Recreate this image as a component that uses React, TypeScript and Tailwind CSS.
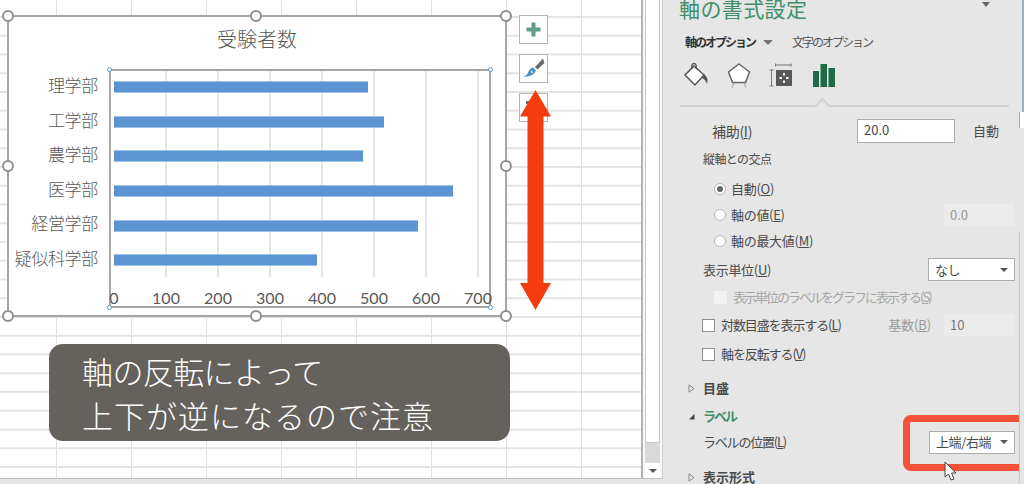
const jp = "font-['Noto_Sans_CJK_JP','Noto_Sans',sans-serif]";

const departments = [
  { name: "理学部", value: 488 },
  { name: "工学部", value: 520 },
  { name: "農学部", value: 479 },
  { name: "医学部", value: 651 },
  { name: "経営学部", value: 585 },
  { name: "疑似科学部", value: 390 },
];

const ticks = [0, 100, 200, 300, 400, 500, 600, 700];

function Handle({ className }: { className: string }) {
  return (
    <div
      className={`absolute w-[12px] h-[12px] rounded-full bg-white border-2 border-[#8f8f8f] ${className}`}
    />
  );
}

function Dot({ className }: { className: string }) {
  return (
    <div
      className={`absolute w-[5px] h-[5px] rounded-full bg-white border border-[#5b9bd5] ${className}`}
    />
  );
}

function Chart() {
  return (
    <div className="absolute left-[7px] top-[15px] w-[500px] h-[302px] bg-white border-2 border-[#a6a6a6] font-light">
      <div className="h-[52px] pt-[8px] text-center text-[20px] leading-[28px] text-[#595959]">
        受験者数
      </div>
      <div className="flex">
        <div className="w-[89px] mr-[1px] text-right text-[17px] text-[#595959]">
          {departments.map((d) => (
            <div key={d.name} className="h-[34.6px] leading-[32px] tracking-[-0.3px] whitespace-nowrap">
              {d.name}
            </div>
          ))}
        </div>
        <div className="relative ml-[10px] w-[382px] h-[239px] border-2 border-[#a6a6a6]">
          {ticks.slice(1).map((t, i) => (
            <div
              key={t}
              className="absolute top-0 h-[206px] w-[2px] bg-[#e6e6e6]"
              style={{ left: 54 + i * 52 }}
            />
          ))}
          <div className="relative pl-[3px] -mt-[1px]">
            {departments.map((d) => (
              <div key={d.name} className="h-[34.6px] flex items-center">
                <div
                  className="h-[12px] bg-[#5b93d3] border-y border-[#9cc4ea]"
                  style={{ width: d.value * 0.52 }}
                />
              </div>
            ))}
          </div>
          <div className="flex -ml-[23px] mt-[10px] font-['Lato',sans-serif] font-normal text-[16px] leading-[20px] text-[#595959]">
            {ticks.map((t) => (
              <div key={t} className="w-[52px] shrink-0 text-center">
                {t}
              </div>
            ))}
          </div>
        </div>
      </div>
    </div>
  );
}

function Arrow() {
  return (
    <svg className="absolute left-[519px] top-[89px]" width="33" height="222" viewBox="0 0 33 222">
      <path d="M16.5 1 L32 27.5 L24.5 27.5 L24.5 194 L32 194 L16.5 221 L1 194 L8.5 194 L8.5 27.5 L1 27.5 Z" fill="#f53c0c" />
    </svg>
  );
}

function ChartButtons() {
  return (
    <div className="absolute left-[519px] top-[15px] flex flex-col gap-[10px]">
      <div className="w-[29px] h-[29px] bg-white border border-[#b5b5b5] flex items-center justify-center">
        <svg width="15" height="15" viewBox="0 0 15 15">
          <path d="M5.5 0.5h4v5h5v4h-5v5h-4v-5h-5v-4h5z" fill="#5f9d8a" />
        </svg>
      </div>
      <div className="w-[29px] h-[29px] bg-white border border-[#b5b5b5] flex items-center justify-center">
        <svg width="23" height="23" viewBox="0 0 23 23">
          <path d="M13 10 L21 1.5 L22.5 6 L15.5 12.5 Z" fill="#6b6b6b" />
          <path d="M11 10.5 L14 13.5 Q12 20 1 20 Q5.5 18 6.5 14.5 Q8 11 11 10.5Z" fill="#4f8fc7" />
          <path d="M9 14 L11 16" stroke="#cfe2f3" strokeWidth="1.5" />
        </svg>
      </div>
      <div className="w-[29px] h-[29px] bg-white border border-[#b5b5b5] flex items-center justify-center">
        <svg width="17" height="17" viewBox="0 0 17 17">
          <path d="M1 2h5l2 3H1z" fill="#6b6b6b" />
        </svg>
      </div>
    </div>
  );
}

function Sheet() {
  return (
    <div className="relative w-[643px] h-[478px] shrink-0 overflow-hidden border-r-2 border-[#b4b4b4] bg-white bg-[linear-gradient(to_bottom,#e3e3e3_1.5px,transparent_1.5px),linear-gradient(to_right,#e0e0e0_1.5px,transparent_1.5px)] bg-[size:100%_18.75px,75px_100%] bg-[position:0_16px,56px_0]">
      <Chart />
      <Handle className="left-[2px] top-[10px]" />
      <Handle className="left-[250px] top-[10px]" />
      <Handle className="left-[500px] top-[10px]" />
      <Handle className="left-[2px] top-[160px]" />
      <Handle className="left-[500px] top-[160px]" />
      <Handle className="left-[2px] top-[310px]" />
      <Handle className="left-[250px] top-[310px]" />
      <Handle className="left-[500px] top-[310px]" />
      <Dot className="left-[107px] top-[67px]" />
      <Dot className="left-[488px] top-[67px]" />
      <Dot className="left-[107px] top-[305px]" />
      <Dot className="left-[488px] top-[305px]" />
      <ChartButtons />
      <Arrow />
      <div className="absolute left-[49px] top-[344px] w-[461px] h-[97px] rounded-[14px] bg-[#625e5a]/98 pl-[33px] pt-[5px] text-[31px] leading-[44px] text-white font-light">
        <div className="tracking-[-0.6px]">軸の反転によって</div>
        <div className="tracking-[1px]">上下が逆になるので注意</div>
      </div>
    </div>
  );
}

function Scrollbar() {
  return (
    <div className="w-[20px] h-[478px] shrink-0 bg-[#f7f7f7] pl-[2px] pr-[2px] flex flex-col border-r border-[#cfcfcf]">
      <div className="h-[443px] bg-white border border-[#c9c9c9] border-t-0" />
      <div className="h-[20px] bg-[#d9d9d9]" />
      <div className="h-[15px] bg-white flex items-center justify-center">
        <div className="w-0 h-0 border-x-[4px] border-x-transparent border-t-[4px] border-t-[#555]" />
      </div>
    </div>
  );
}

function Radio({ checked, label, u }: { checked?: boolean; label: string; u: string }) {
  return (
    <div className="h-[26px] flex items-center pl-[49px] text-[13px] text-[#4a4a4a]">
      <div className="w-[12px] h-[12px] rounded-full bg-white border border-[#b5b5b5] flex items-center justify-center">
        {checked && <div className="w-[6px] h-[6px] rounded-full bg-[#666]" />}
      </div>
      <span className="ml-[5px] tracking-[-0.3px]">
        {label}(<span className="underline">{u}</span>)
      </span>
    </div>
  );
}

function Check({
  label,
  u,
  disabled,
  inset,
  tracking,
}: {
  label: string;
  u: string;
  disabled?: boolean;
  inset?: boolean;
  tracking: string;
}) {
  return (
    <div className={`flex items-center text-[13px] ${tracking} ${inset ? "pl-[49px]" : "pl-[37px]"}`}>
      <div
        className={`w-[13px] h-[13px] ${disabled ? "bg-[#f2f2f2]" : "bg-white border border-[#8f8f8f]"}`}
      />
      <span className={`ml-[6px] ${disabled ? "text-[#a6a6a6]" : "text-[#4a4a4a]"}`}>
        {label}(<span className="underline">{u}</span>)
      </span>
    </div>
  );
}

function Caret({ open }: { open?: boolean }) {
  return open ? (
    <svg width="7" height="7" viewBox="0 0 7 7" className="ml-[23px]">
      <path d="M6.5 1v5.5H1z" fill="#404040" />
    </svg>
  ) : (
    <svg width="7" height="9" viewBox="0 0 7 9" className="ml-[23px]">
      <path d="M1 .8L6 4.5L1 8.2Z" fill="none" stroke="#8a8a8a" />
    </svg>
  );
}

function Select({ text, w }: { text: string; w: string }) {
  return (
    <div className={`h-[23px] bg-white border border-[#ababab] flex items-center justify-between pl-[6px] pr-[6px] text-[13px] text-[#4a4a4a] ${w}`}>
      <span className="tracking-[-0.4px]">{text}</span>
      <div className="w-0 h-0 border-x-[4px] border-x-transparent border-t-[4px] border-t-[#555]" />
    </div>
  );
}

function FormatIcons() {
  return (
    <div className="flex items-center h-[28px] pl-[18px] mt-[9px]">
      <svg width="26" height="26" viewBox="0 0 26 26" className="shrink-0">
        <path d="M2 13 L11 4 L21 13 L12 23 Z" fill="#fff" stroke="#555" strokeWidth="1.5" />
        <path d="M9 7 Q8 1.5 11 1.5 Q14 1.5 13 7" fill="none" stroke="#555" strokeWidth="1.4" />
        <path d="M21 12 Q26 16 24 22 Q22 17 19 16Z" fill="#555" />
      </svg>
      <svg width="24" height="26" viewBox="0 0 24 26" className="ml-[18px] shrink-0">
        <path d="M12 2 L22.5 10 L18.5 20.5 L5.5 20.5 L1.5 10 Z" fill="#fff" stroke="#666" strokeWidth="1.5" />
        <path d="M5 25.5 L7 21 M19 25.5 L17 21" fill="none" stroke="#aaa" strokeWidth="1.2" />
      </svg>
      <svg width="24" height="24" viewBox="0 0 24 24" className="ml-[18px] shrink-0">
        <path d="M6.5 2 H22 M6.5 .5 V3.5 M22 .5 V3.5 M.5 7 H4.5 M.5 23 H4.5 M2.5 7 V23" fill="none" stroke="#777" />
        <rect x="7" y="7" width="16" height="16" fill="#595959" />
        <path d="M15 10 V12.5 M15 17.5 V20 M10.5 15 H13 M17 15 H19.5" stroke="#fff" strokeWidth="1.8" />
      </svg>
      <svg width="22" height="23" viewBox="0 0 22 23" className="ml-[20px] shrink-0">
        <rect x="0" y="7" width="6" height="16" fill="#1f6b47" />
        <rect x="7.5" y="0" width="6.5" height="23" fill="#1f6b47" />
        <rect x="15.5" y="4" width="6.5" height="19" fill="#1f6b47" />
      </svg>
    </div>
  );
}

function Panel() {
  return (
    <div className="relative flex-1 h-[484px] bg-[#e6e6e6] overflow-hidden text-[#4a4a4a]">
      <div className="h-[20px] pl-[14px] -mt-[6px] text-[21px] leading-[28px] text-[#3f8f6b] tracking-[0.4px]">
        軸の書式設定
      </div>
      <div className="flex items-center mt-[18px] h-[20px] pl-[20px] text-[12px]">
        <span className="font-bold tracking-[-2px] text-[#333]">軸のオプション</span>
        <div className="ml-[8px] w-0 h-0 border-x-[5px] border-x-transparent border-t-[5px] border-t-[#777]" />
        <span className="ml-[19px] tracking-[-2px] text-[#555]">文字のオプション</span>
      </div>
      <FormatIcons />
      <div className="relative mt-[16px] mx-[15px] h-[2px] bg-[#d2d2d2]">
        <div className="absolute left-[137px] -top-[5px] w-[11px] h-[11px] rotate-45 bg-[#e6e6e6] border-l-2 border-t-2 border-[#d2d2d2]" />
      </div>

      <div className="mt-[12px] h-[24px] flex items-center pl-[47px] text-[14px]">
        <span className="w-[145px] tracking-[-0.3px]">補助(<span className="underline">I</span>)</span>
        <div className="w-[98px] h-[24px] bg-white border border-[#ababab] pl-[6px] leading-[20px] text-[13px]">20.0</div>
        <span className="ml-[18px] text-[13px]">自動</span>
      </div>
      <div className="mt-[6px] h-[20px] flex items-center pl-[38px] text-[12px] tracking-[-0.6px]">縦軸との交点</div>
      <div className="mt-[7px] relative">
        <Radio checked label="自動" u="O" />
        <Radio label="軸の値" u="E" />
        <Radio label="軸の最大値" u="M" />
        <div className="absolute left-[279px] top-[28px] w-[70px] h-[22px] bg-[#ebebeb] pl-[6px] leading-[22px] text-[13px] text-[#9a9a9a]">0.0</div>
      </div>
      <div className="mt-[4px] h-[23px] flex items-center justify-between pl-[38px] pr-[9px] text-[13px]">
        <span className="tracking-[-0.3px]">表示単位(<span className="underline">U</span>)</span>
        <Select text="なし" w="w-[87px]" />
      </div>
      <div className="mt-[5px] h-[22px] flex items-center">
        <Check disabled inset tracking="tracking-[-2px]" label="表示単位のラベルをグラフに表示する" u="S" />
      </div>
      <div className="mt-[6px] h-[22px] flex items-center justify-between pr-[10px]">
        <Check tracking="tracking-[-1.1px]" label="対数目盛を表示する" u="L" />
        <div className="flex items-center">
          <span className="text-[13px] text-[#9a9a9a] tracking-[-0.1px]">基数(<span className="underline">B</span>)</span>
          <div className="ml-[13px] w-[70px] h-[22px] bg-[#ebebeb] pl-[6px] leading-[22px] text-[13px] text-[#777]">10</div>
        </div>
      </div>
      <div className="mt-[7px] h-[22px] flex items-center">
        <Check tracking="tracking-[-1.1px]" label="軸を反転する" u="V" />
      </div>
      <div className="mt-[13px] h-[20px] flex items-center text-[13px] font-bold text-[#4a4a4a]">
        <Caret />
        <span className="ml-[8px]">目盛</span>
      </div>
      <div className="mt-[8px] h-[20px] flex items-center text-[13px] font-bold text-[#3f8f6b]">
        <Caret open />
        <span className="ml-[8px] tracking-[-2px]">ラベル</span>
      </div>
      <div className="mt-[4px] h-[24px] flex items-center justify-between pl-[38px] pr-[9px] text-[13px]">
        <span className="tracking-[-1.2px]">ラベルの位置(<span className="underline">L</span>)</span>
        <Select text="上端/右端" w="w-[86px]" />
      </div>
      <div className="mt-[13px] h-[20px] flex items-center text-[13px] font-bold">
        <Caret />
        <span className="ml-[8px]">表示形式</span>
      </div>

      <div className="absolute left-[317px] top-[2px] w-0 h-0 border-x-[4px] border-x-transparent border-t-[5px] border-t-[#666]" />
      <div className="absolute right-[-8px] top-[415px] w-[129px] h-[56px] rounded-[8px] border-[7px] border-[#f4513a]" />
      <svg className="absolute left-[279px] top-[461px]" width="14" height="22" viewBox="0 0 14 22">
        <path d="M1 1 L1 16 L4.5 13 L7 19 L10 18 L7.5 12 L12 12 Z" fill="#fff" stroke="#444" />
      </svg>
      <div className="absolute right-0 top-0 h-[112px] w-[2px] bg-[#9fb0c0]" />
      <div className="absolute right-0 top-[112px] w-[5px] h-[16px] bg-white border-l border-[#a8a8a8]" />
      <div className="absolute right-0 top-[232px] bottom-0 w-[5px] bg-[#e6e6e6] border-l border-[#c8c8c8]" />
    </div>
  );
}

export default function App() {
  return (
    <div className={`relative w-[1024px] h-[484px] overflow-hidden flex bg-[#e6e6e6] ${jp}`}>
      <div className="flex flex-col">
        <div className="flex">
          <Sheet />
          <Scrollbar />
        </div>
        <div className="h-[6px] bg-[#e6e6e6] border-t border-[#c0c0c0]" />
      </div>
      <div className="w-[2px]" />
      <Panel />
    </div>
  );
}
